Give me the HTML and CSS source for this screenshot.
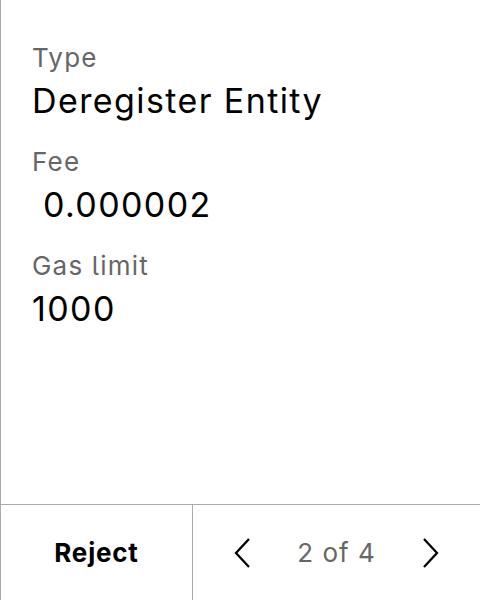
FILE: index.html
```html
<!DOCTYPE html>
<html>
<head>
<meta charset="utf-8">
<link rel="stylesheet" href="styles.css">
</head>
<body>
<div class="panel">
  <div class="details">
    <div class="field">
      <div class="label">Type</div>
      <div class="value">Deregister Entity</div>
    </div>
    <div class="field">
      <div class="label">Fee</div>
      <div class="value fee"> 0.000002</div>
    </div>
    <div class="field">
      <div class="label">Gas limit</div>
      <div class="value">1000</div>
    </div>
  </div>
  <div class="footer">
    <button class="reject">Reject</button>
    <div class="pager">
      <svg class="chev" width="16" height="30" viewBox="0 0 16 30"><path d="M15 1 L2 15 L15 29" fill="none" stroke="#000" stroke-width="2.3"/></svg>
      <span class="count">2 of 4</span>
      <svg class="chev" width="16" height="30" viewBox="0 0 16 30"><path d="M1 1 L14 15 L1 29" fill="none" stroke="#000" stroke-width="2.3"/></svg>
    </div>
  </div>
</div>
</body>
</html>
```

FILE: styles.css
```css
html, body {
  margin: 0;
  padding: 0;
  background: #fff;
}
body {
  font-family: Inter, "Liberation Sans", sans-serif;
  font-feature-settings: "cv05" 1;
  color: #000;
}
.panel {
  width: 480px;
  height: 600px;
  box-sizing: border-box;
  border-left: 1px solid #aaa;
  display: flex;
  flex-direction: column;
}
.details {
  flex: 1;
  padding: 42px 0 0 31px;
  display: flex;
  flex-direction: column;
  gap: 25px;
}
.label {
  font-size: 26px;
  line-height: 32px;
  letter-spacing: 1.2px;
  color: #666;
}
.value {
  font-size: 34px;
  line-height: 40px;
  letter-spacing: 1.4px;
  margin-top: 7px;
}
.fee {
  white-space: pre;
}
.footer {
  height: 95px;
  border-top: 1px solid #aaa;
  display: flex;
}
.reject {
  width: 192px;
  border: none;
  border-right: 1px solid #aaa;
  background: #fff;
  font-family: inherit;
  font-feature-settings: inherit;
  font-size: 26px;
  font-weight: 700;
  letter-spacing: 0.8px;
  color: #000;
  padding: 0;
}
.pager {
  flex: 1;
  display: flex;
  align-items: center;
  justify-content: center;
  gap: 47px;
}
.count {
  font-size: 26px;
  letter-spacing: 1px;
  color: #666;
}
.chev {
  display: block;
}
```
